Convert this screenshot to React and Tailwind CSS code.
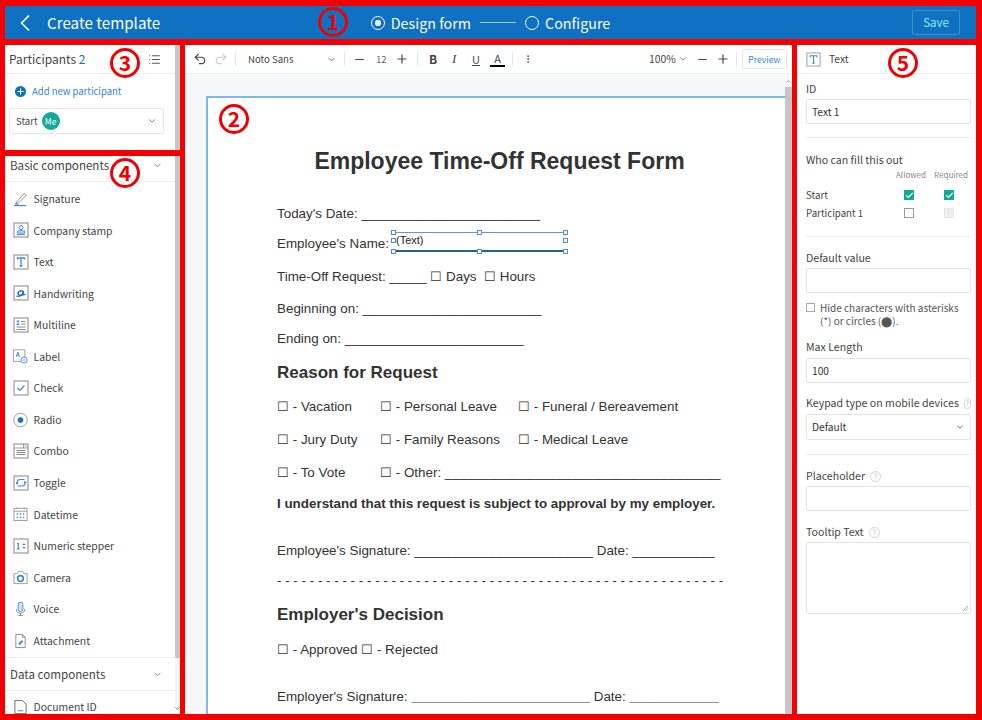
import {
  ChevronLeft,
  ChevronDown,
  ChevronUp,
  Undo2,
  Redo2,
  Minus,
  Plus,
  MoreVertical,
  List,
  Check,
} from "lucide-react";

// small framed icon used by most of the component list
function Frame({ children }) {
  return (
    <svg width="16" height="16" viewBox="0 0 16 16" fill="none" className="shrink-0">
      <rect x="1" y="1" width="14" height="14" fill="#fff" stroke="#9a9a9a" strokeWidth="1.2" />
      {children}
    </svg>
  );
}

const BLUE = "#3f8ad8";

const basicItems = [
  {
    name: "Signature",
    icon: (
      <svg width="16" height="16" viewBox="0 0 16 16" fill="none">
        <path d="M4 11 L12 2 L14 4 L6 12 L3 13 Z" stroke="#8a8a8a" />
        <path d="M1 15 H14" stroke={BLUE} strokeWidth="1.3" />
        <path d="M2 13 L6 14" stroke={BLUE} />
      </svg>
    ),
  },
  {
    name: "Company stamp",
    icon: (
      <Frame>
        <circle cx="8" cy="5.5" r="2" stroke={BLUE} />
        <path d="M7.5 7.5 V9 H4.5 V11 H11.5 V9 H8.5 V7.5" stroke={BLUE} />
        <path d="M4 12.5 H12" stroke={BLUE} />
      </Frame>
    ),
  },
  {
    name: "Text",
    icon: (
      <Frame>
        <path d="M4.5 5.5 V4 H11.5 V5.5 M8 4 V12 M6.5 12 H9.5" stroke={BLUE} strokeWidth="1.3" />
      </Frame>
    ),
  },
  {
    name: "Handwriting",
    icon: (
      <Frame>
        <ellipse cx="7.6" cy="8" rx="2.6" ry="2" transform="rotate(-20 7.6 8)" stroke="#1f6fc4" strokeWidth="1.5" />
        <path d="M10.4 5.8 L9.6 9.6 Q10 10.6 12.6 9 M3.4 11 Q6 12 9.6 10" stroke="#1f6fc4" strokeWidth="1.2" />
      </Frame>
    ),
  },
  {
    name: "Multiline",
    icon: (
      <Frame>
        <path d="M3.5 4 H6.5 M5 4 V7.5 M3.5 7.5 H6.5" stroke={BLUE} />
        <path d="M8 4.5 H12.5 M8 7 H12.5 M3.5 10 H12.5 M3.5 12.5 H12.5" stroke="#8a8a8a" />
      </Frame>
    ),
  },
  {
    name: "Label",
    icon: (
      <svg width="17" height="17" viewBox="0 0 17 17" fill="none">
        <rect x="0.5" y="1" width="13" height="13" fill="#fff" stroke="#9a9a9a" />
        <path d="M3.5 9 L5.5 3.5 L7.5 9 M4.2 7.2 H6.8" stroke={BLUE} />
        <circle cx="12.5" cy="12.5" r="3.5" fill="#fff" stroke={BLUE} />
        <path d="M12.5 11 V14" stroke={BLUE} />
      </svg>
    ),
  },
  {
    name: "Check",
    icon: (
      <Frame>
        <path d="M4.5 8 L7 10.5 L11.5 5.5" stroke={BLUE} strokeWidth="1.2" />
      </Frame>
    ),
  },
  {
    name: "Radio",
    icon: (
      <svg width="16" height="16" viewBox="0 0 16 16" fill="none">
        <circle cx="8" cy="8" r="7.2" fill="#fff" stroke="#9a9a9a" />
        <circle cx="8" cy="8" r="3" fill="#1f6fc4" />
      </svg>
    ),
  },
  {
    name: "Combo",
    icon: (
      <Frame>
        <path d="M1 5 H15 M10.5 1 V5" stroke="#9a9a9a" />
        <path d="M12 3 H13.5" stroke={BLUE} />
        <path d="M3.5 7.5 H12.5 M3.5 9.5 H12.5 M3.5 11.5 H12.5" stroke="#8a8a8a" />
      </Frame>
    ),
  },
  {
    name: "Toggle",
    icon: (
      <Frame>
        <path d="M4 6.5 Q4.5 4.5 7 4.5 H11.5 M4.5 11 H9 Q11.5 11 12 9" stroke={BLUE} strokeWidth="1.2" />
        <circle cx="4" cy="8" r="1.2" fill={BLUE} />
        <circle cx="12" cy="7.5" r="1.2" fill={BLUE} />
      </Frame>
    ),
  },
  {
    name: "Datetime",
    icon: (
      <svg width="16" height="16" viewBox="0 0 16 16" fill="none">
        <rect x="1" y="2" width="14" height="13" fill="#fff" stroke="#9a9a9a" />
        <path d="M1 5 H15 M4 1 V3 M12 1 V3" stroke="#9a9a9a" />
        <path d="M4 8 H5.5 M7.2 8 H8.7 M10.5 8 H12 M4 11.5 H5.5 M7.2 11.5 H8.7 M10.5 11.5 H12" stroke={BLUE} strokeWidth="1.4" />
      </svg>
    ),
  },
  {
    name: "Numeric stepper",
    icon: (
      <Frame>
        <path d="M4 6 L5.2 5 V11 M4 11 H6.4" stroke="#1f6fc4" />
        <path d="M9.5 7 L11 5.3 L12.5 7 M9.5 9 L11 10.7 L12.5 9" fill="#1f6fc4" />
      </Frame>
    ),
  },
  {
    name: "Camera",
    icon: (
      <svg width="16" height="15" viewBox="0 0 16 15" fill="none">
        <path d="M1 3.5 H4.5 L6 1 H10 L11.5 3.5 H15 V14 H1 Z" fill="#fff" stroke="#9a9a9a" />
        <circle cx="8" cy="8.5" r="3" stroke={BLUE} strokeWidth="1.8" />
      </svg>
    ),
  },
  {
    name: "Voice",
    icon: (
      <svg width="16" height="16" viewBox="0 0 16 16" fill="none">
        <rect x="5.5" y="0.8" width="5" height="10" rx="2.5" fill="#cfe3f8" stroke={BLUE} />
        <path d="M3.5 8 Q3.5 12.5 8 12.5 Q12.5 12.5 12.5 8 M8 12.5 V15 M5.5 15 H10.5" stroke="#8a8a8a" />
      </svg>
    ),
  },
  {
    name: "Attachment",
    icon: (
      <svg width="16" height="16" viewBox="0 0 16 16" fill="none">
        <path d="M3 1 H10 L13 4 V15 H3 Z" fill="#fff" stroke="#8a8a8a" />
        <path d="M10 1 V4 H13" stroke="#8a8a8a" />
        <path d="M5.5 11 L9.5 7 L11 8.5 L7 12.5 Z" fill={BLUE} />
      </svg>
    ),
  },
];

function ComponentRow({ icon, name }) {
  return (
    <div className="flex h-[31.57px] items-center pl-[8px]">
      <div className="flex w-[15px] justify-center">{icon}</div>
      <span className="ml-[5.5px] text-[10.4px] text-[#444]">{name}</span>
    </div>
  );
}

function Circled({ children, className }) {
  return (
    <div
      className={`absolute flex h-[30px] w-[30px] items-center justify-center rounded-full border-[3px] border-[#f00000] text-[21px] font-bold text-[#f00000] ${className}`}
    >
      {children}
    </div>
  );
}

function FieldLabel({ children, help, className = "" }) {
  return (
    <div className={`flex items-center gap-[5px] whitespace-nowrap text-[10.6px] text-[#444] ${className}`}>
      {children}
      {help && (
        <span className="flex h-[11px] w-[11px] items-center justify-center rounded-full border border-[#d5d5d5] text-[7px] text-[#bbb]">
          ?
        </span>
      )}
    </div>
  );
}

function Box({ children, className = "" }) {
  return (
    <div
      className={`flex items-center rounded-[2px] border border-[#e4e4e4] px-[5px] text-[10.2px] text-[#333] ${className}`}
    >
      {children}
    </div>
  );
}

function Tick({ on, disabled }) {
  if (on) {
    return (
      <span className="flex h-[10px] w-[10px] items-center justify-center bg-[#14a89a]">
        <Check size={9} color="#fff" strokeWidth={3} />
      </span>
    );
  }
  return (
    <span
      className={`h-[10px] w-[10px] border ${disabled ? "border-[#e8e8e8] bg-[#eee]" : "border-[#999] bg-white"}`}
    />
  );
}

function Divider({ className }) {
  return <div className={`h-px bg-[#ececec] ${className}`} />;
}

function Handle({ className }) {
  return <span className={`absolute h-[5px] w-[5px] border border-[#4a90d0] bg-white ${className}`} />;
}

function Row({ children, className = "" }) {
  return <div className={`flex h-[20px] items-center whitespace-pre ${className}`}>{children}</div>;
}

function DocPage() {
  return (
    <div className="h-[640px] w-[579px] overflow-hidden border-t-2 border-l-2 border-[#7db8f0] bg-white pt-[48px] pl-[69px] font-['Liberation_Sans',sans-serif] text-[13.4px] text-[#333]">
      <div className="-ml-[69px] flex h-[30px] items-center justify-center pl-[6px] text-[23px] font-bold">
        Employee Time-Off Request Form
      </div>
      <Row className="mt-[28px]">Today's Date: ________________________</Row>
      <Row className="mt-[10px]">
        Employee's Name:
        <div className="relative mt-[-5px] ml-[4px] h-[20px] w-[172px] border-t border-b-2 border-t-[#5b9bd5] border-b-[#2c5f8f] pl-[3px] text-[11px] leading-[15px] text-[#222]">
          (Text)
          <Handle className="-left-[2px] -top-[3px]" />
          <Handle className="left-[84px] -top-[3px]" />
          <Handle className="-right-[3px] -top-[3px]" />
          <Handle className="-left-[2px] top-[5px]" />
          <Handle className="-right-[3px] top-[5px]" />
          <Handle className="-left-[2px] -bottom-[4px]" />
          <Handle className="left-[84px] -bottom-[4px]" />
          <Handle className="-right-[3px] -bottom-[4px]" />
        </div>
      </Row>
      <Row className="mt-[13px]">Time-Off Request: _____ ☐ Days  ☐ Hours</Row>
      <Row className="mt-[12px]">Beginning on: ________________________</Row>
      <Row className="mt-[10px]">Ending on: ________________________</Row>
      <Row className="mt-[14px] text-[17px] font-bold">Reason for Request</Row>
      <div className="grid grid-cols-[103px_138px_1fr]">
        <Row className="mt-[14px]">☐ - Vacation</Row>
        <Row className="mt-[14px]">☐ - Personal Leave</Row>
        <Row className="mt-[14px]">☐ - Funeral / Bereavement</Row>
        <Row className="mt-[13px]">☐ - Jury Duty</Row>
        <Row className="mt-[13px]">☐ - Family Reasons</Row>
        <Row className="mt-[13px]">☐ - Medical Leave</Row>
        <Row className="mt-[13px]">☐ - To Vote</Row>
        <Row className="col-span-2 mt-[13px]">☐ - Other: _____________________________________</Row>
      </div>
      <Row className="mt-[11px] font-bold">I understand that this request is subject to approval by my employer.</Row>
      <Row className="mt-[27px]">Employee's Signature: ________________________ Date: ___________</Row>
      <Row className="mt-[10px]">
        - - - - - - - - - - - - - - - - - - - - - - - - - - - - - - - - - - - - - - - - - - - - - - - - - - - - - - -
      </Row>
      <Row className="mt-[14px] text-[17px] font-bold">Employer's Decision</Row>
      <Row className="mt-[15px]">☐ - Approved ☐ - Rejected</Row>
      <Row className="mt-[27px]">
        Employer's Signature: <b>________________________</b> Date: <b>____________</b>
      </Row>
    </div>
  );
}

function Toolbar() {
  return (
    <div className="flex h-[29px] shrink-0 items-center border-b border-[#eee] bg-white text-[#444]">
      <div className="ml-[8px] flex w-[42px] gap-[7px]">
        <Undo2 size={14} strokeWidth={2} color="#444" />
        <Redo2 size={14} strokeWidth={2} color="#ccc" />
      </div>
      <div className="h-[14px] w-px bg-[#e5e5e5]" />
      <span className="ml-[12px] w-[78px] text-[9.6px]">Noto Sans</span>
      <ChevronDown size={11} color="#666" />
      <div className="ml-[7px] h-[14px] w-px bg-[#e5e5e5]" />
      <Minus size={13} className="ml-[8px]" />
      <span className="ml-[10px] w-[12px] text-[9.5px] text-[#666]">12</span>
      <Plus size={14} className="ml-[7px]" />
      <div className="ml-[8px] h-[14px] w-px bg-[#e5e5e5]" />
      <span className="ml-[11px] w-[14px] text-[12px] font-bold">B</span>
      <span className="ml-[9px] w-[13px] font-['Liberation_Serif',serif] text-[13px] italic">I</span>
      <span className="ml-[7px] w-[14px] text-[11px] underline">U</span>
      <span className="ml-[4px] w-[15px] border-b-2 border-black text-center text-[11px] leading-[14px]">A</span>
      <div className="ml-[7px] h-[14px] w-px bg-[#e5e5e5]" />
      <MoreVertical size={10} className="ml-[10px]" />
      <span className="ml-[116px] text-[10.4px]">100%</span>
      <ChevronDown size={10} className="ml-[2px]" color="#666" />
      <Minus size={13} className="ml-[8px]" />
      <Plus size={14} className="ml-[7px]" />
      <div className="ml-[6px] h-[14px] w-px bg-[#e5e5e5]" />
      <div className="ml-[5px] flex h-[20px] w-[45px] items-center justify-center rounded-[2px] border border-[#e5e5e5] text-[8.6px] text-[#2f86d6]">
        Preview
      </div>
    </div>
  );
}

export default function App() {
  return (
    <div className="relative h-[720px] w-[982px] overflow-hidden bg-[#f40000] pt-[6px] pr-[6px] pb-[6px] pl-[5px] font-['Noto_Sans_CJK_KR',sans-serif]">
      <header className="flex h-[33px] items-center justify-between bg-[#0e71c1] text-white">
        <div className="flex w-[320px] items-center">
          <ChevronLeft size={28} strokeWidth={1.5} className="ml-[6px]" />
          <span className="ml-[8px] text-[15.2px]">Create template</span>
        </div>
        <div className="flex items-center">
          <span className="flex h-[14px] w-[14px] items-center justify-center rounded-full border-[1.5px] border-white">
            <span className="h-[6px] w-[6px] rounded-full bg-white" />
          </span>
          <span className="ml-[6px] text-[14.3px]">Design form</span>
          <span className="mx-[9px] h-px w-[36px] bg-[#a9cff0]" />
          <span className="h-[14px] w-[14px] rounded-full border-[1.5px] border-white" />
          <span className="ml-[6px] text-[14.3px]">Configure</span>
        </div>
        <div className="flex w-[320px] justify-end pr-[16px]">
          <div className="flex h-[25px] w-[48px] items-center justify-center rounded-[2px] border border-[#3d8fd0] text-[11.5px] text-[#9aeaf5]">
            Save
          </div>
        </div>
      </header>

      <div className="mt-[6px] flex h-[669px] gap-[5px]">
        {/* left column */}
        <div className="flex w-[175px] shrink-0 flex-col gap-[6px]">
          <section className="flex h-[105px] bg-white">
            <div className="min-w-0 flex-1">
              <div className="flex h-[29px] items-center justify-between border-b border-[#eee] pr-[14px] pl-[4px]">
                <span className="text-[12px] text-[#444]">
                  Participants <span className="text-[#0e71c1]">2</span>
                </span>
                <List size={13} color="#555" />
              </div>
              <div className="mt-[10px] flex h-[15px] items-center pl-[10px] text-[9.5px] text-[#2f86d6]">
                <span className="flex h-[11px] w-[11px] items-center justify-center rounded-full bg-[#0e71c1]">
                  <Plus size={9} color="#fff" strokeWidth={3} />
                </span>
                <span className="ml-[6px]">Add new participant</span>
              </div>
              <div className="mt-[9px] ml-[4px] flex h-[26px] w-[155px] items-center justify-between rounded-[2px] border border-[#e6e6e6] pr-[6px] pl-[6px]">
                <span className="flex items-center text-[9.6px] text-[#444]">
                  Start
                  <span className="ml-[4px] flex h-[18px] w-[18px] items-center justify-center rounded-full bg-[#14a89a] text-[8.5px] text-white">
                    Me
                  </span>
                </span>
                <ChevronDown size={10} color="#666" />
              </div>
            </div>
            <div className="w-[5px] bg-[#c6c6c6]" />
          </section>

          <section className="relative flex min-h-0 flex-1 bg-white">
            <div className="min-w-0 flex-1 overflow-hidden">
              <div className="flex h-[26px] items-center justify-between border-b border-[#eee] pr-[12px] pb-[6px] pl-[5px]">
                <span className="text-[11.6px] text-[#444]">Basic components</span>
                <ChevronDown size={11} color="#777" />
              </div>
              <div className="pt-[1px]">
                {basicItems.map((item) => (
                  <ComponentRow key={item.name} icon={item.icon} name={item.name} />
                ))}
              </div>
              <div className="mt-[1px] flex h-[34px] items-center justify-between border-y border-[#eee] pr-[12px] pl-[5px]">
                <span className="text-[11.6px] text-[#444]">Data components</span>
                <ChevronDown size={11} color="#777" />
              </div>
              <div className="flex h-[31.5px] items-center pl-[8px]">
                <div className="flex w-[15px] justify-center">
                  <svg width="16" height="16" viewBox="0 0 16 16" fill="none">
                    <path d="M2 1 H10 L14 5 V15 H2 Z" stroke="#666" />
                    <path d="M5 12 H11" stroke={BLUE} />
                  </svg>
                </div>
                <span className="ml-[5.5px] text-[10.4px] text-[#444]">Document ID</span>
              </div>
            </div>
            <div className="flex w-[5px] flex-col items-center">
              <div className="h-[502px] w-full bg-[#c6c6c6]" />
              <div className="w-full flex-1 bg-[#f4f4f4]" />
              <ChevronDown size={7} color="#666" strokeWidth={3} className="mb-[2px]" />
            </div>
          </section>
        </div>

        {/* center */}
        <main className="flex w-[607px] shrink-0 flex-col overflow-hidden bg-[#f6f7f8]">
          <Toolbar />
          <div className="flex min-h-0 flex-1">
            <div className="ml-[21px] pt-[22px]">
              <DocPage />
            </div>
            <div className="flex w-[7px] flex-col items-center pt-[4px]">
              <ChevronUp size={7} color="#999" strokeWidth={3} />
              <div className="mt-[2px] h-full w-full bg-[#c6c6c6]" />
            </div>
          </div>
        </main>

        {/* right */}
        <aside className="min-w-0 flex-1 bg-white">
          <div className="flex h-[29px] items-center border-b border-[#eee] pl-[9px]">
            <svg width="15" height="15" viewBox="0 0 16 16" fill="none">
              <rect x="1" y="1" width="14" height="14" stroke="#9a9a9a" />
              <path d="M4.5 5.5 V4 H11.5 V5.5 M8 4 V12 M6.5 12 H9.5" stroke={BLUE} strokeWidth="1.2" />
            </svg>
            <span className="ml-[8px] text-[10.2px] text-[#444]">Text</span>
          </div>
          <div className="pr-[5px] pl-[9px]">
            <FieldLabel className="mt-[7px] h-[16px]">ID</FieldLabel>
            <Box className="mt-[2px] h-[25px]">Text 1</Box>
            <Divider className="mt-[13px]" />
            <FieldLabel className="mt-[14px] h-[16px]">Who can fill this out</FieldLabel>
            <div className="flex h-[14px] items-center justify-end text-[8px] text-[#888]">
              <span className="w-[40px] text-center">Allowed</span>
              <span className="w-[40px] text-center">Required</span>
            </div>
            <div className="mt-[4px] flex h-[18px] items-center pr-[2px] text-[9.7px] text-[#444]">
              <span className="flex-1">Start</span>
              <span className="flex w-[40px] justify-center"><Tick on /></span>
              <span className="flex w-[40px] justify-center"><Tick on /></span>
            </div>
            <div className="flex h-[18px] items-center pr-[2px] text-[9.7px] text-[#444]">
              <span className="flex-1">Participant 1</span>
              <span className="flex w-[40px] justify-center"><Tick /></span>
              <span className="flex w-[40px] justify-center"><Tick disabled /></span>
            </div>
            <Divider className="mt-[14px]" />
            <FieldLabel className="mt-[13px] h-[16px]">Default value</FieldLabel>
            <Box className="mt-[2px] h-[25px]" />
            <div className="mt-[8px] flex text-[10px] leading-[13px] text-[#555]">
              <span className="mt-[2px] h-[9px] w-[9px] shrink-0 border border-[#aaa]" />
              <span className="ml-[5px]">Hide characters with asterisks (*) or circles (⬤).</span>
            </div>
            <FieldLabel className="mt-[12px] h-[16px]">Max Length</FieldLabel>
            <Box className="mt-[3px] h-[25px]">100</Box>
            <FieldLabel help className="mt-[12px] h-[16px]">Keypad type on mobile devices</FieldLabel>
            <Box className="mt-[3px] h-[26px] justify-between">
              Default
              <ChevronDown size={10} color="#555" />
            </Box>
            <Divider className="mt-[14px]" />
            <FieldLabel help className="mt-[13px] h-[16px]">Placeholder</FieldLabel>
            <Box className="mt-[2px] h-[25px]" />
            <FieldLabel help className="mt-[13px] h-[16px]">Tooltip Text</FieldLabel>
            <Box className="relative mt-[2px] h-[72px]">
              <svg width="7" height="7" viewBox="0 0 7 7" className="absolute right-[1px] bottom-[1px]">
                <path d="M1 6 L6 1 M3.5 6 L6 3.5" stroke="#aaa" />
              </svg>
            </Box>
          </div>
        </aside>
      </div>

      <Circled className="left-[318px] top-[7px]">1</Circled>
      <Circled className="left-[219px] top-[104px]">2</Circled>
      <Circled className="left-[110px] top-[48px]">3</Circled>
      <Circled className="left-[110px] top-[158px]">4</Circled>
      <Circled className="left-[888px] top-[48px]">5</Circled>
    </div>
  );
}
